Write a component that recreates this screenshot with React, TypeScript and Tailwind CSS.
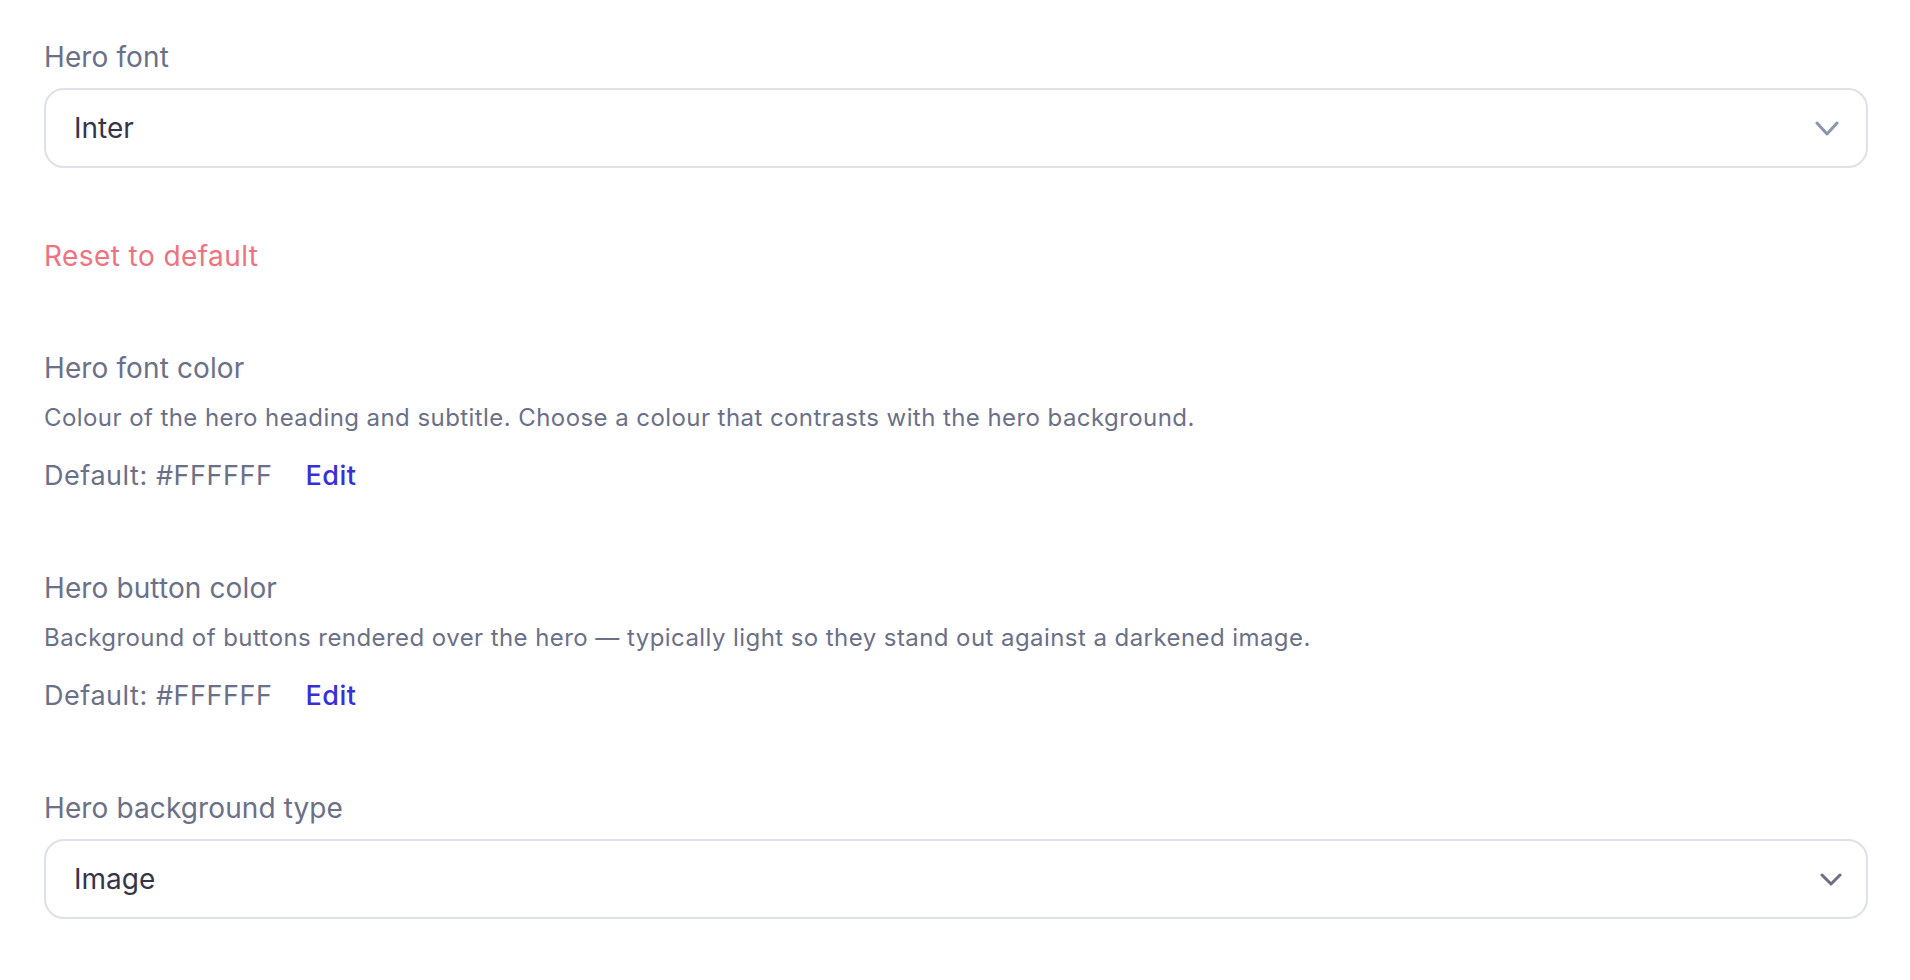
const fieldLabel = "block text-[28px] leading-[36px] tracking-[0.004em] text-[#6b7089]";
const help = "block text-[24px] leading-[30px] tracking-[0.018em] text-[#6b7089]";

function Chevron({ color, w, h }: { color: string; w: number; h: number }) {
  return (
    <svg width={w + 4} height={h + 4} viewBox={`0 0 ${w + 4} ${h + 4}`} fill="none">
      <polyline
        points={`2,2 ${w / 2 + 2},${h + 2} ${w + 2},2`}
        stroke={color}
        strokeWidth="3"
        strokeLinecap="round"
        strokeLinejoin="round"
      />
    </svg>
  );
}

function SelectBox({
  value,
  chevron,
  pad,
  w,
  h,
}: {
  value: string;
  chevron: string;
  pad: string;
  w: number;
  h: number;
}) {
  return (
    <div
      className={`flex h-[80px] items-center justify-between rounded-[20px] border-2 border-[#dfe1ea] bg-white pl-[28px] ${pad}`}
    >
      <span className="text-[28px] text-[#35354a]">{value}</span>
      <Chevron color={chevron} w={w} h={h} />
    </div>
  );
}

function ColorSetting({ title, description }: { title: string; description: string }) {
  return (
    <div className="flex flex-col">
      <span className={fieldLabel}>{title}</span>
      <p className={`${help} mt-[17px]`}>{description}</p>
      <div className="mt-[25px] flex items-center gap-[33px] text-[27px] leading-[36px] tracking-[0.02em]">
        <span className="text-[#6b7089]">Default: #FFFFFF</span>
        <button className="font-medium text-[#3730d9]">Edit</button>
      </div>
    </div>
  );
}

export default function App() {
  return (
    <div className="min-h-screen bg-white pl-[44px] pr-[42px] pt-[39px] font-['Inter',sans-serif]">
      <div className="flex flex-col">
        <span className={fieldLabel}>Hero font</span>
        <div className="mt-[13px]">
          <SelectBox value="Inter" chevron="#8a95b0" pad="pr-[27px]" w={20} h={11} />
        </div>
      </div>

      <button className="mt-[70px] block text-[28px] leading-[36px] tracking-[0.015em] text-[#ef7280]">
        Reset to default
      </button>

      <div className="mt-[76px]">
        <ColorSetting
          title="Hero font color"
          description="Colour of the hero heading and subtitle. Choose a colour that contrasts with the hero background."
        />
      </div>

      <div className="mt-[76px]">
        <ColorSetting
          title="Hero button color"
          description="Background of buttons rendered over the hero — typically light so they stand out against a darkened image."
        />
      </div>

      <div className="mt-[76px] flex flex-col">
        <span className={fieldLabel}>Hero background type</span>
        <div className="mt-[13px]">
          <SelectBox value="Image" chevron="#6e6e7e" pad="pr-[24px]" w={18} h={9} />
        </div>
      </div>
    </div>
  );
}
